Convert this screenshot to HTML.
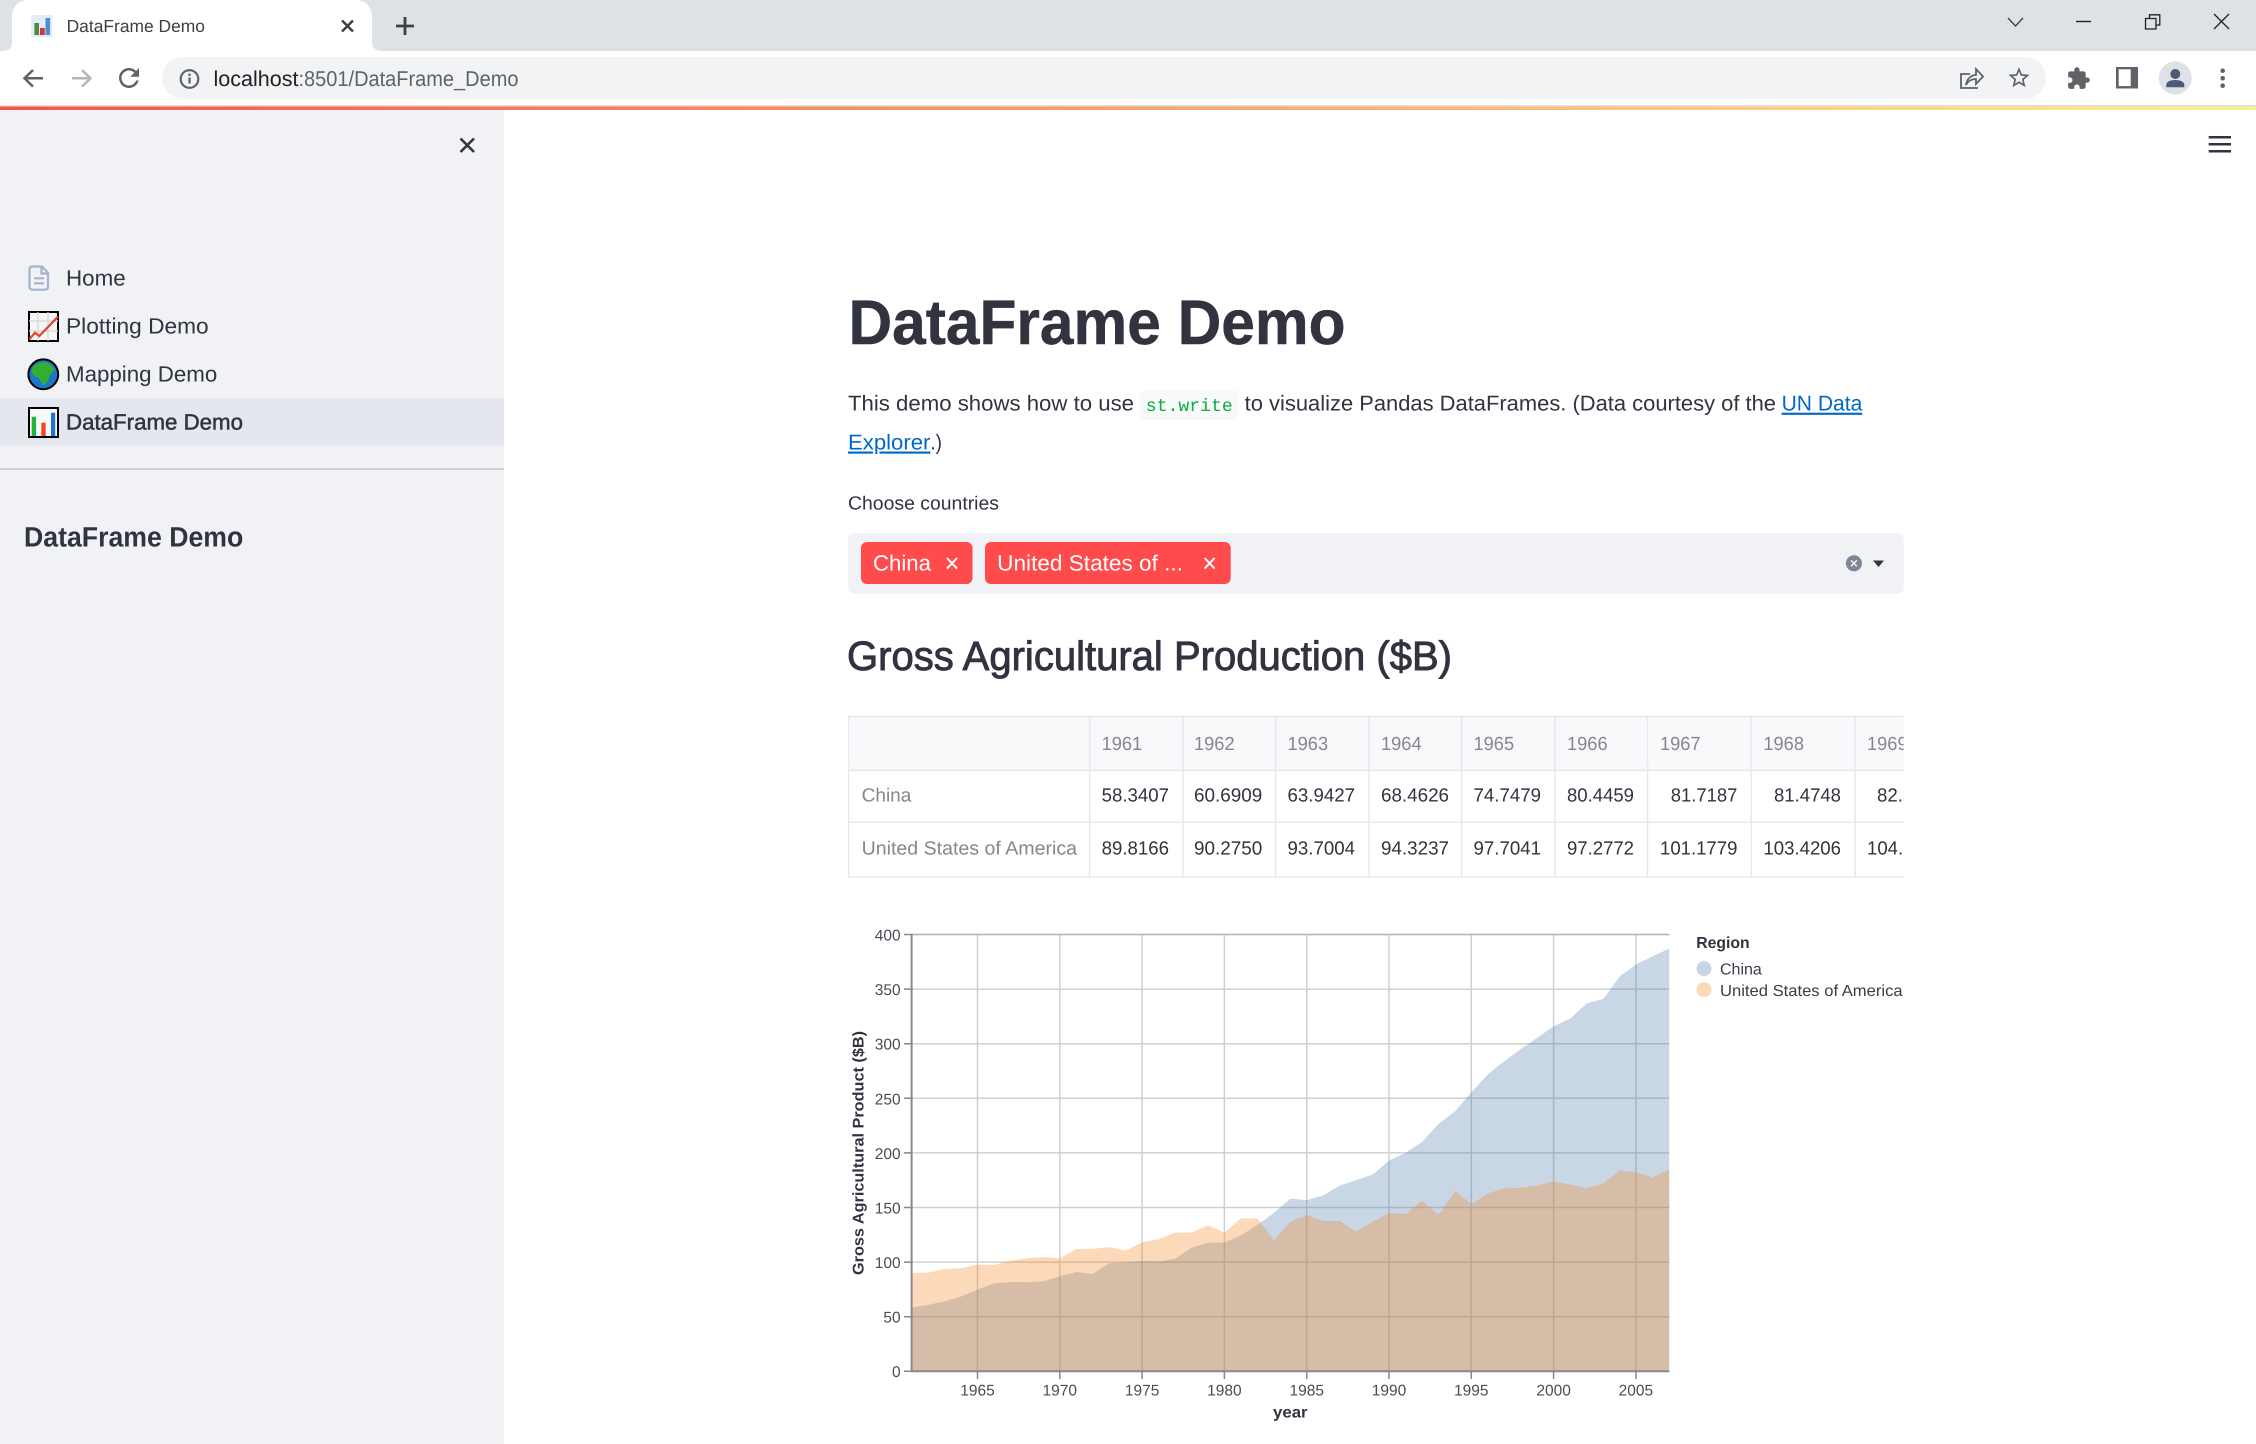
<!DOCTYPE html>
<html lang="en">
<head>
<meta charset="utf-8">
<title>DataFrame Demo</title>
<style>
html,body{margin:0;padding:0;background:#fff;width:2256px;height:1444px;overflow:hidden}
svg{display:block}
text{font-family:"Liberation Sans",sans-serif;fill:#31333f;text-rendering:geometricPrecision}
.mono{font-family:"Liberation Mono",monospace}
.b{font-weight:700}
.nav{font-size:22px}
.p{font-size:21.5px}
.th{font-size:19px;fill:#85868e}
.td{font-size:19px}
.ax{font-size:15.5px;fill:#4a4b55}
.lg{font-size:16px;fill:#3c3d48}
</style>
</head>
<body>
<svg width="2256" height="1444" viewBox="0 0 2256 1444" xmlns="http://www.w3.org/2000/svg">
<defs>
<linearGradient id="rb" x1="0" x2="1" y1="0" y2="0"><stop offset="0" stop-color="#f4544f"/><stop offset="1" stop-color="#fdf08d"/></linearGradient>
<clipPath id="tc"><rect x="848" y="710" width="1055.7" height="175"/></clipPath>
</defs>
<rect width="2256" height="1444" fill="#fff"/>

<!-- browser tab strip -->
<rect width="2256" height="51" fill="#dee1e6"/>
<path d="M2 51C9 51 12 48 12 42V16C12 7 19 0 28 0H356C365 0 372 7 372 16V42C372 48 376 51 382 51Z" fill="#fff"/>
<rect x="31" y="15" width="21.5" height="22" fill="#e4edf5"/>
<rect x="34.4" y="23" width="4.6" height="12" fill="#4f8a3c"/>
<rect x="40" y="28" width="4.8" height="7" fill="#d0383a"/>
<rect x="45.5" y="18" width="4.6" height="17" fill="#4a90d4"/>
<text x="66.6" y="32" font-size="17.5" style="fill:#3c4043" textLength="138.4" lengthAdjust="spacingAndGlyphs">DataFrame Demo</text>
<path d="M342 20.500L353 31.500M353 20.500L342 31.500" stroke="#3c4043" stroke-width="2.500" fill="none"/>
<path d="M405 17V35M396 26H414" stroke="#3c4043" stroke-width="2.800" fill="none"/>
<!-- window controls -->
<path d="M2008 18L2015.500 26L2023 18" stroke="#3c4043" stroke-width="1.300" fill="none"/>
<path d="M2076 21.500H2091" stroke="#202124" stroke-width="1.400" fill="none"/>
<path d="M2145.500 18.500H2156V29H2145.500ZM2149.500 18.500V14.800H2159.800V25H2156" stroke="#202124" stroke-width="1.300" fill="none"/>
<path d="M2214 14L2229 29M2229 14L2214 29" stroke="#202124" stroke-width="1.300" fill="none"/>

<!-- toolbar -->
<path d="M43 78.300H25M33 70L24.500 78.300L33 86.600" stroke="#5f6368" stroke-width="2.500" fill="none"/>
<path d="M72 78.300H90M82 70L90.500 78.300L82 86.600" stroke="#b4b6b9" stroke-width="2.500" fill="none"/>
<path transform="translate(114 63) scale(1.25)" fill="#5f6368" d="M17.650 6.350A7.958 7.958 0 0 0 12 4c-4.420 0-7.990 3.580-7.990 8s3.570 8 7.990 8c3.730 0 6.840-2.550 7.730-6h-2.080A5.990 5.990 0 0 1 12 18c-3.310 0-6-2.690-6-6s2.690-6 6-6c1.660 0 3.140.690 4.220 1.780L13 11h7V4l-2.350 2.350z"/>
<rect x="162" y="57" width="1884" height="42" rx="21" fill="#f1f3f4"/>
<circle cx="189.500" cy="79" r="8.800" fill="none" stroke="#5f6368" stroke-width="2.200"/>
<rect x="188.400" y="77.500" width="2.300" height="6" fill="#5f6368"/><rect x="188.400" y="73.600" width="2.300" height="2.300" fill="#5f6368"/>
<text x="213.500" y="86" font-size="21.500" style="fill:#202124" textLength="85" lengthAdjust="spacingAndGlyphs">localhost</text>
<text x="298.500" y="86" font-size="21.500" style="fill:#5f6368" textLength="220" lengthAdjust="spacingAndGlyphs">:8501/DataFrame_Demo</text>
<path d="M1978 88H1961V74H1970" stroke="#5f6368" stroke-width="1.800" fill="none"/>
<path d="M1966 85C1967 78 1972 75 1976 75V69L1983 76.500L1976 84V79C1972 79 1968 81 1966 85Z" stroke="#5f6368" stroke-width="1.800" fill="none"/>
<path transform="translate(2006.400 65.100) scale(1.05)" fill="#5f6368" d="M22 9.240l-7.190-.620L12 2 9.190 8.630 2 9.240l5.460 4.730L5.820 21 12 17.270 18.180 21l-1.630-7.030L22 9.240zM12 15.400l-3.760 2.270 1-4.280-3.320-2.880 4.380-.380L12 6.100l1.710 4.040 4.380.380-3.320 2.880 1 4.280L12 15.400z"/>
<path transform="translate(2066.100 66.200) scale(1.030)" fill="#5f6368" d="M20.500 11H19V7c0-1.100-.9-2-2-2h-4V3.500C13 2.120 11.880 1 10.500 1S8 2.120 8 3.500V5H4c-1.100 0-1.990.9-1.990 2v3.800H3.500c1.490 0 2.700 1.210 2.700 2.700s-1.210 2.700-2.700 2.700H2V20c0 1.100.9 2 2 2h3.800v-1.500c0-1.490 1.210-2.700 2.700-2.700 1.490 0 2.700 1.210 2.700 2.700V22H17c1.100 0 2-.9 2-2v-4h1.500c1.380 0 2.500-1.120 2.500-2.500S21.880 11 20.500 11z"/>
<rect x="2116" y="67" width="22" height="21.500" fill="#5f6368"/><rect x="2118.700" y="69.300" width="12" height="16.800" fill="#fff"/>
<circle cx="2175.300" cy="78" r="16.500" fill="#dee1e6"/>
<circle cx="2175.300" cy="74" r="5" fill="#4a5a78"/>
<path d="M2166.300 87.300V84.800C2166.300 81.500 2171 80 2175.300 80C2179.600 80 2184.300 81.500 2184.300 84.800V87.300Z" fill="#4a5a78"/>
<circle cx="2222.700" cy="70.700" r="2.300" fill="#5f6368"/><circle cx="2222.700" cy="78.300" r="2.300" fill="#5f6368"/><circle cx="2222.700" cy="85.700" r="2.300" fill="#5f6368"/>

<!-- decoration line -->
<rect y="105" width="2256" height="2" fill="#e0e0e0"/>
<rect y="106.500" width="2256" height="3.500" fill="url(#rb)"/>

<!-- sidebar -->
<rect y="110" width="504" height="1334" fill="#f0f2f6"/>
<path d="M460.500 138.500L474 152M474 138.500L460.500 152" stroke="#31333f" stroke-width="2.600" fill="none"/>

<rect y="398.300" width="504" height="47.400" fill="#e4e7ed"/>
<path d="M32.500 266.500H42L48 272.800V286.500C48 288.500 47 289.700 45 289.700H32.500C30.500 289.700 29.500 288.500 29.500 286.500V269.500C29.500 267.500 30.500 266.500 32.500 266.500ZM41.500 267V273.500H48M34 278.300H44M34 283.300H44" fill="none" stroke="#a6b2cf" stroke-width="2.200"/>
<text class="nav" x="66" y="285.500" textLength="59.700" lengthAdjust="spacingAndGlyphs">Home</text>

<rect x="29" y="312" width="29" height="29" fill="#f6f6f6" stroke="#000" stroke-width="2"/>
<path d="M29 321H58M29 331H58M38 312V341M48 312V341" stroke="#d5d5d5" stroke-width="1.200" fill="none"/>
<path d="M29.500 339L35 332.700L39.300 336L58 316.700" stroke="#e0452b" stroke-width="2.200" fill="none"/>
<text class="nav" x="66" y="333.500" textLength="142.700" lengthAdjust="spacingAndGlyphs">Plotting Demo</text>

<circle cx="43.300" cy="374.300" r="14.900" fill="#1a78c8" stroke="#000" stroke-width="2"/>
<path d="M33 367C36 362 46 361 50 364L55 370C52 372 50 374 49 378C48 382 45 385 42 385C41 381 40 377 36 377C32 376 31 371 33 367Z" fill="#35ad2e"/>
<text class="nav" x="66" y="381.500" textLength="151.300" lengthAdjust="spacingAndGlyphs">Mapping Demo</text>

<rect x="29" y="408" width="29" height="29" fill="#f8f8f8" stroke="#000" stroke-width="2"/>
<rect x="31.700" y="416.700" width="4.400" height="19.300" fill="#23b33b"/>
<rect x="41.300" y="422.700" width="4.400" height="13.300" fill="#f0472a"/>
<rect x="51" y="412.700" width="4.200" height="23.300" fill="#1a76d2"/>
<text class="nav" x="66" y="429.700" stroke="#31333f" stroke-width=".5" textLength="177" lengthAdjust="spacingAndGlyphs">DataFrame Demo</text>

<rect y="468" width="504" height="2" fill="#cdcfd4"/>
<text class="b" x="24" y="546.700" font-size="28" textLength="219.300" lengthAdjust="spacingAndGlyphs">DataFrame Demo</text>

<!-- main header -->
<path d="M2208.700 137.300H2231M2208.700 144.300H2231M2208.700 151.300H2231" stroke="#31333f" stroke-width="2.500" fill="none"/>

<text class="b" x="848.500" y="344" font-size="63" stroke="#31333f" stroke-width=".5" textLength="497" lengthAdjust="spacingAndGlyphs">DataFrame Demo</text>

<text class="p" x="848" y="410.700" textLength="286" lengthAdjust="spacingAndGlyphs">This demo shows how to use</text>
<rect x="1139.500" y="390" width="99" height="30" rx="4" fill="#f8f9fb"/>
<text class="mono" x="1145.800" y="411" font-size="18" style="fill:#09ab3b" textLength="87" lengthAdjust="spacingAndGlyphs">st.write</text>
<text class="p" x="1244.700" y="410.700" textLength="531.300" lengthAdjust="spacingAndGlyphs">to visualize Pandas DataFrames. (Data courtesy of the</text>
<text class="p" x="1781.600" y="410.700" style="fill:#0068c9;text-decoration:underline" textLength="80.700" lengthAdjust="spacingAndGlyphs">UN Data</text>
<text class="p" x="848" y="449.500" style="fill:#0068c9;text-decoration:underline" textLength="82.400" lengthAdjust="spacingAndGlyphs">Explorer</text>
<text class="p" x="930.400" y="449.500" textLength="11.600" lengthAdjust="spacingAndGlyphs">.)</text>

<text x="848" y="509.300" font-size="19" textLength="151" lengthAdjust="spacingAndGlyphs">Choose countries</text>

<!-- multiselect -->
<rect x="848.200" y="533.300" width="1055.500" height="60.400" rx="6" fill="#f0f2f6"/>
<rect x="861" y="542" width="111.500" height="42" rx="6" fill="#ff4b4b"/>
<text x="873" y="570.700" font-size="22" style="fill:#fff" textLength="58" lengthAdjust="spacingAndGlyphs">China</text>
<path d="M947 558L957 568.600M957 558L947 568.600" stroke="#fff" stroke-width="2" fill="none"/>
<rect x="985" y="542" width="245.700" height="42" rx="6" fill="#ff4b4b"/>
<text x="997.200" y="570.700" font-size="22" style="fill:#fff" textLength="185.800" lengthAdjust="spacingAndGlyphs">United States of ...</text>
<path d="M1204.600 558L1214.600 568.600M1214.600 558L1204.600 568.600" stroke="#fff" stroke-width="2" fill="none"/>
<circle cx="1853.900" cy="563.300" r="8" fill="#808495"/>
<path d="M1851 560.400L1856.800 566.200M1856.800 560.400L1851 566.200" stroke="#f0f2f6" stroke-width="1.500" fill="none"/>
<path d="M1873 560.500H1884L1878.500 567Z" fill="#31333f"/>

<text x="847" y="670" font-size="41" stroke="#31333f" stroke-width=".9" textLength="605" lengthAdjust="spacingAndGlyphs">Gross Agricultural Production ($B)</text>

<!-- table -->
<g clip-path="url(#tc)">
<rect x="848" y="716" width="1056" height="54.300" fill="#f8f9fb"/>
<path d="M848 716.500H1904M848 770.300H1904M848 822.300H1904M848 877H1904M848.500 716V877M1089.600 716V877M1183 716V877M1275.600 716V877M1369 716V877M1461.600 716V877M1555 716V877M1647.500 716V877M1751.400 716V877M1855.300 716V877" stroke="#e6e8ec" stroke-width="1.500" fill="none"/>
<g class="th">
<text class="th" x="1101.600" y="750" textLength="40.600" lengthAdjust="spacingAndGlyphs">1961</text>
<text class="th" x="1194" y="750" textLength="40.600" lengthAdjust="spacingAndGlyphs">1962</text>
<text class="th" x="1287.500" y="750" textLength="40.600" lengthAdjust="spacingAndGlyphs">1963</text>
<text class="th" x="1381" y="750" textLength="40.600" lengthAdjust="spacingAndGlyphs">1964</text>
<text class="th" x="1473.500" y="750" textLength="40.600" lengthAdjust="spacingAndGlyphs">1965</text>
<text class="th" x="1567" y="750" textLength="40.600" lengthAdjust="spacingAndGlyphs">1966</text>
<text class="th" x="1660" y="750" textLength="40.600" lengthAdjust="spacingAndGlyphs">1967</text>
<text class="th" x="1763.400" y="750" textLength="40.600" lengthAdjust="spacingAndGlyphs">1968</text>
<text class="th" x="1867" y="750" textLength="40.600" lengthAdjust="spacingAndGlyphs">1969</text>
<text class="th" x="861.600" y="801.700" textLength="49.800" lengthAdjust="spacingAndGlyphs">China</text>
<text class="th" x="861.600" y="854.300" textLength="215.400" lengthAdjust="spacingAndGlyphs">United States of America</text>
</g>
<text class="td" x="1101.600" y="801.700" textLength="67.400" lengthAdjust="spacingAndGlyphs">58.3407</text>
<text class="td" x="1194" y="801.700" textLength="68.300" lengthAdjust="spacingAndGlyphs">60.6909</text>
<text class="td" x="1287.500" y="801.700" textLength="67.500" lengthAdjust="spacingAndGlyphs">63.9427</text>
<text class="td" x="1381" y="801.700" textLength="68" lengthAdjust="spacingAndGlyphs">68.4626</text>
<text class="td" x="1473.500" y="801.700" textLength="67.500" lengthAdjust="spacingAndGlyphs">74.7479</text>
<text class="td" x="1567" y="801.700" textLength="67" lengthAdjust="spacingAndGlyphs">80.4459</text>
<text class="td" x="1670.700" y="801.700" textLength="66.700" lengthAdjust="spacingAndGlyphs">81.7187</text>
<text class="td" x="1774" y="801.700" textLength="67" lengthAdjust="spacingAndGlyphs">81.4748</text>
<text class="td" x="1877" y="801.700" textLength="67.400" lengthAdjust="spacingAndGlyphs">82.3246</text>
<text class="td" x="1101.600" y="854.300" textLength="67.400" lengthAdjust="spacingAndGlyphs">89.8166</text>
<text class="td" x="1194" y="854.300" textLength="68.300" lengthAdjust="spacingAndGlyphs">90.2750</text>
<text class="td" x="1287.500" y="854.300" textLength="67.500" lengthAdjust="spacingAndGlyphs">93.7004</text>
<text class="td" x="1381" y="854.300" textLength="68" lengthAdjust="spacingAndGlyphs">94.3237</text>
<text class="td" x="1473.500" y="854.300" textLength="67.500" lengthAdjust="spacingAndGlyphs">97.7041</text>
<text class="td" x="1567" y="854.300" textLength="67" lengthAdjust="spacingAndGlyphs">97.2772</text>
<text class="td" x="1660" y="854.300" textLength="77.400" lengthAdjust="spacingAndGlyphs">101.1779</text>
<text class="td" x="1763.400" y="854.300" textLength="77.600" lengthAdjust="spacingAndGlyphs">103.4206</text>
<text class="td" x="1867" y="854.300" textLength="77.400" lengthAdjust="spacingAndGlyphs">104.6258</text>
</g>

<!-- chart grid -->
<path d="M911.600 934.500H1669.300M911.600 989.100H1669.300M911.600 1043.700H1669.300M911.600 1098.300H1669.300M911.600 1152.900H1669.300M911.600 1207.500H1669.300M911.600 1262.100H1669.300M911.600 1316.700H1669.300M977.500 934.500V1371.200M1059.800 934.500V1371.200M1142.100 934.500V1371.200M1224.400 934.500V1371.200M1306.700 934.500V1371.200M1389 934.500V1371.200M1471.300 934.500V1371.200M1553.600 934.500V1371.200M1635.900 934.500V1371.200" stroke="#d0d0d0" stroke-width="1.500" fill="none"/>
<path d="M911.600 934.500H1669.300" stroke="#b8b8b8" stroke-width="1.500" fill="none"/>
<!-- chart areas -->
<g transform="translate(911.600 1371.200) scale(16.470 -1.092)">
<polygon fill="#4c78a8" fill-opacity=".3" points="0,0 0,58.340 1,60.690 2,63.940 3,68.460 4,74.750 5,80.450 6,81.720 7,81.470 8,82.320 9,87 10,90.800 11,89 12,99 13,99.500 14,101 15,100.500 16,103 17,113 18,117.500 19,118 20,124.500 21,134 22,145 23,158 24,156.700 25,161 26,170 27,175 28,180 29,193 30,200 31,210 32,226.500 33,238 34,255.500 35,272 36,284 37,295 38,305.500 39,316 40,323 41,337 42,341 43,361.600 44,372.500 45,380 46,387 46,0"/>
<polygon fill="#f58518" fill-opacity=".3" points="0,0 0,89.820 1,90.280 2,93.700 3,94.320 4,97.700 5,97.280 6,101.180 7,103.420 8,104.630 9,103.300 10,112 11,112 12,113.600 13,110.500 14,118 15,121 16,127 17,127 18,133.500 19,127 20,140 21,140 22,120 23,137 24,143 25,137.600 26,137.600 27,127.600 28,137 29,144.800 30,144 31,156 32,143 33,165 34,153 35,163 36,167.500 37,168 38,170 39,174 40,171 41,167.500 42,172 43,184 44,182 45,177.500 46,184.700 46,0"/>
</g>
<!-- axes -->
<path d="M911.600 934V1372M911 1371.200H1669.300" stroke="#888" stroke-width="2" fill="none"/>
<path d="M904 934.500H911.600M904 989.100H911.600M904 1043.700H911.600M904 1098.300H911.600M904 1152.900H911.600M904 1207.500H911.600M904 1262.100H911.600M904 1316.700H911.600M904 1371.200H911.600M977.500 1371V1379M1059.800 1371V1379M1142.100 1371V1379M1224.400 1371V1379M1306.700 1371V1379M1389 1371V1379M1471.300 1371V1379M1553.600 1371V1379M1635.900 1371V1379" stroke="#888" stroke-width="1.500" fill="none"/>
<g text-anchor="end">
<text class="ax" x="900.600" y="940.500">400</text>
<text class="ax" x="900.600" y="995.100">350</text>
<text class="ax" x="900.600" y="1049.700">300</text>
<text class="ax" x="900.600" y="1104.300">250</text>
<text class="ax" x="900.600" y="1158.900">200</text>
<text class="ax" x="900.600" y="1213.500">150</text>
<text class="ax" x="900.600" y="1268.100">100</text>
<text class="ax" x="900.600" y="1322.700">50</text>
<text class="ax" x="900.600" y="1377.200">0</text>
</g>
<g text-anchor="middle">
<text class="ax" x="977.500" y="1395.400">1965</text>
<text class="ax" x="1059.800" y="1395.400">1970</text>
<text class="ax" x="1142.100" y="1395.400">1975</text>
<text class="ax" x="1224.400" y="1395.400">1980</text>
<text class="ax" x="1306.700" y="1395.400">1985</text>
<text class="ax" x="1389" y="1395.400">1990</text>
<text class="ax" x="1471.300" y="1395.400">1995</text>
<text class="ax" x="1553.600" y="1395.400">2000</text>
<text class="ax" x="1635.900" y="1395.400">2005</text>
</g>
<text class="b" x="1273" y="1417.500" font-size="16" textLength="34.600" lengthAdjust="spacingAndGlyphs">year</text>
<text class="b" transform="translate(863.300 1275) rotate(-90)" font-size="15.500" textLength="244" lengthAdjust="spacingAndGlyphs">Gross Agricultural Product ($B)</text>

<!-- legend -->
<text class="b" x="1696.200" y="948" font-size="16" textLength="53.400" lengthAdjust="spacingAndGlyphs">Region</text>
<circle cx="1704" cy="968.600" r="7.500" fill="#4c78a8" fill-opacity=".3"/>
<text class="lg" x="1720" y="974.700" textLength="41.800" lengthAdjust="spacingAndGlyphs">China</text>
<circle cx="1704" cy="989.700" r="7.500" fill="#f58518" fill-opacity=".3"/>
<text class="lg" x="1720" y="995.800" textLength="182.600" lengthAdjust="spacingAndGlyphs">United States of America</text>
</svg>
</body>
</html>
